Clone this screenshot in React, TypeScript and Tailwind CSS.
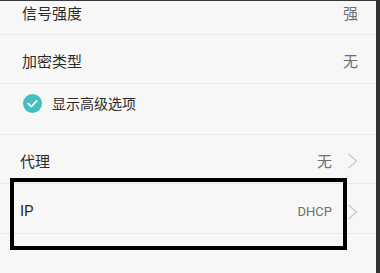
import React from "react";

const Chevron = () => (
    <svg width="11" height="16" viewBox="0 0 11 16" className="ml-[15px]">
        <polyline points="1.5,1 9.5,8 1.5,15" fill="none" stroke="#c9c9c9" strokeWidth="1.3" />
    </svg>
);

interface RowProps {
    label: string;
    value?: string;
    arrow?: boolean;
    latin?: boolean;
    className: string;
}

const Row: React.FC<RowProps> = ({label, value, arrow, latin, className}) => (
    <div className={`flex items-center justify-between pl-[20px] pr-[18px] border-b border-[#e8e8e8] ${className}`}>
        <span className={latin ? "text-[15px] text-[#2b2b2b] font-[Roboto]" : "text-[15px] text-[#2b2b2b]"}>{label}</span>
        <div className="flex items-center">
            {value && (
                <span className={latin ? "text-[13px] text-[#6f6f6f] font-[Roboto]" : "text-[15px] text-[#6f6f6f]"}>{value}</span>
            )}
            {arrow && <Chevron />}
        </div>
    </div>
);

export default function App() {
    return (
        <div
            className="relative w-[380px] h-[273px] overflow-hidden flex bg-[#f7f7f7]"
            style={{fontFamily: '"Noto Sans CJK SC", "Noto Sans", sans-serif'}}
        >
            <div className="flex-1 flex flex-col border-t border-[#3a3a3a]">
                <Row label="信号强度" value="强" className="h-[34px] pb-[8px] pl-[22px]" />
                <Row label="加密类型" value="无" className="h-[49px] pt-[4px] pl-[22px]" />
                <div className="h-[51px] flex items-center pl-[23px] pb-[12px] border-b border-[#e8e8e8]">
                    <svg width="19" height="19" viewBox="0 0 20 20">
                        <circle cx="10" cy="10" r="10" fill="#43bfc4" />
                        <polyline points="5.5,10.2 8.7,13.2 14.5,7.2" fill="none" stroke="#fff" strokeWidth="1.8" strokeLinecap="round" strokeLinejoin="round" />
                    </svg>
                    <span className="ml-[10px] text-[14px] text-[#2b2b2b]">显示高级选项</span>
                </div>
                <Row label="代理" value="无" arrow className="h-[49px] pt-[4px]" />
                <Row label="IP" value="DHCP" arrow latin className="h-[50px] pt-[6px]" />
                <div className="flex-1" />
            </div>
            <div className="w-[4px] bg-[#333]" />
            <div className="absolute left-[10px] top-[178px] w-[337px] h-[72px] border-[4px] border-black" />
        </div>
    );
}
